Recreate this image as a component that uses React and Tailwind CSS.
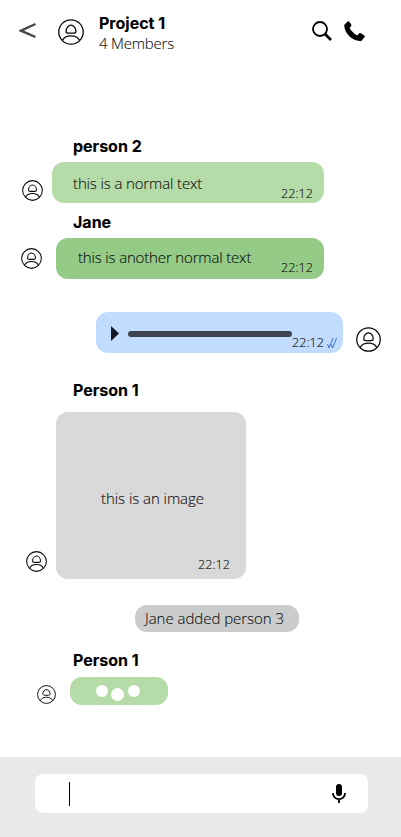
function Avatar({ className }) {
  return (
    <svg viewBox="0 0 26 26" fill="none" stroke="#080808" strokeWidth="1.3" className={`shrink-0 ${className}`}>
      <circle cx="13" cy="13" r="12.2" />
      <path d="M8.1 12.400C8.1 9 10.2 6.200 13 6.200s4.900 2.800 4.900 6.200c0 1.100-1 1.700-2.300 1.700h-5.200c-1.300 0-2.300-.6-2.300-1.700Z" />
      <path d="M4.400 21.600C5.600 18.500 8.700 16.800 13 16.800s7.400 1.700 8.600 4.800" />
    </svg>
  );
}

function Name({ children, className }) {
  return (
    <h2 className={`ml-[73px] h-5 whitespace-nowrap font-['Inter',sans-serif] text-base leading-5 font-bold text-black ${className}`}>
      {children}
    </h2>
  );
}

function Time({ className }) {
  return <time className={`text-[12.5px] leading-4 font-light tracking-[0.08px] whitespace-nowrap ${className}`}>22:12</time>;
}

function Header() {
  return (
    <header className="flex h-[136px] items-start pl-[19px]">
      <svg viewBox="0 0 18 17" className="mt-[22px] h-[17px] w-[18px]" fill="none" stroke="#484848" strokeWidth="2.4">
        <path d="M16.5 2 2 8.700l14.500 6.300" />
      </svg>
      <Avatar className="mt-[19px] ml-[21px] h-[26px] w-[26px]" />
      <div className="mt-[13px] ml-[15px] w-[212px]">
        <h1 className="font-['Inter',sans-serif] text-base leading-5 font-bold text-black">Project 1</h1>
        <p className="-mt-px text-[15px] leading-[22px] font-light tracking-[-0.22px]">4 Members</p>
      </div>
      <svg viewBox="0 0 20 20" className="mt-[21px] ml-[0.5px] h-5 w-5" fill="none" stroke="black" strokeWidth="1.8">
        <circle cx="8" cy="8" r="7" />
        <path d="m13 13 6 6" strokeWidth="2.6" />
      </svg>
      <svg viewBox="0 0 21 21" className="mt-[21px] ml-[12.5px] h-[21px] w-[21px]" fill="black">
        <path d="M.6 3.600 3.700.5q.8-.6 1.600.2l2 3q.4.9-.3 1.600L5.900 6.700q-.2.7.3 1.400c1.700 2.600 3.600 4.400 6.200 5.900q.7.4 1.200-.1l1.800-1.700q.7-.4 1.500 0l3.500 2.200q.8.7.2 1.600l-2.800 3.500q-.7.7-1.900.6C7.500 19.200.8 12.400.2 4.700q-.1-.6.4-1.100Z" />
      </svg>
    </header>
  );
}

function Footer() {
  return (
    <footer className="h-20 bg-[#e9e9e9] px-[35px] pt-[17px]">
      <div className="flex h-[39px] w-[333px] items-start justify-between rounded-lg bg-white pt-2 pr-[22px] pl-[34px]">
        <div className="h-6 w-px bg-black" />
        <svg viewBox="0 0 14 19" className="mt-[2px] h-[19px] w-[14px]" fill="none" stroke="black">
          <rect x="4" y="0" width="6" height="12" rx="3" fill="black" stroke="none" />
          <path d="M.9 9a6.100 6.100 0 0 0 12.200 0M7 15v4" strokeWidth="1.8" />
        </svg>
      </div>
    </footer>
  );
}

export default function App() {
  return (
    <div className="flex h-[837px] w-[401px] flex-col overflow-hidden bg-white font-['Open_Sans','Noto_Sans',sans-serif] text-[#101010] [-webkit-text-stroke:0.12px]">
      <Header />
      <main className="flex h-[621px] flex-col">
        <Name>person 2</Name>
        <div className="mt-[6px] flex items-start pl-[21.5px]">
          <Avatar className="mt-[18px] h-[21px] w-[21px]" />
          <div className="ml-[9.5px] flex h-[41px] w-[272px] justify-between rounded-xl bg-[#b5dba9] pr-[11px] pl-[21px]">
            <span className="mt-[10px] text-[15px] leading-[22px] font-light tracking-[-0.13px] whitespace-nowrap">this is a normal text</span>
            <Time className="mt-6" />
          </div>
        </div>

        <Name className="mt-[9px]">Jane</Name>
        <div className="mt-[6px] flex items-start pl-[21px]">
          <Avatar className="mt-[10px] h-[21px] w-[21px]" />
          <div className="ml-[14px] flex h-[41px] w-[268px] justify-between rounded-xl bg-[#94cb87] pr-[11px] pl-[22px]">
            <span className="mt-[8px] text-[15px] leading-[22px] font-light tracking-[-0.16px] whitespace-nowrap">this is another normal text</span>
            <Time className="mt-[22px]" />
          </div>
        </div>

        <div className="mt-[33px] flex items-start pl-[96px]">
          <div className="flex h-[41px] w-[247px] items-start rounded-xl bg-[#c2dcff] pl-[14.5px]">
            <svg viewBox="0 0 8 15" className="mt-[13.5px] h-[15px] w-2" fill="#111922"><path d="M0 0l8 7.500L0 15Z" /></svg>
            <div className="mt-[19px] ml-[9.5px] h-[6px] w-[164px] rounded-full bg-[#3c4350]" />
            <Time className="mt-[23px]" />
            <svg viewBox="0 0 10 12" className="mt-[25px] ml-[3px] h-3 w-[10px]" fill="none" stroke="#3975d4" strokeWidth="1">
              <path d="M.5 7 2 11 6.200 1M4 7l1.500 4L9.600 1" />
            </svg>
          </div>
          <Avatar className="mt-[15px] ml-[13px] h-[25px] w-[25px]" />
        </div>

        <Name className="mt-[27px]">Person 1</Name>
        <div className="mt-[12px] flex items-start pl-[26px]">
          <Avatar className="mt-[139px] h-[21px] w-[21px]" />
          <div className="ml-[9px] flex h-[167px] w-[190px] flex-col rounded-xl bg-[#d9d9d9]">
            <span className="mt-[75px] ml-[45px] text-[15px] leading-[22px] font-light tracking-[-0.05px] whitespace-nowrap">this is an image</span>
            <Time className="mt-[48px] mr-4 self-end" />
          </div>
        </div>

        <div className="mt-[26px] ml-[135px] h-[27px] w-[164px] rounded-xl bg-[#cbcdcc] pt-[2px] pl-[10px] text-[15px] leading-[22px] font-light tracking-[-0.03px] whitespace-nowrap">
          <span>Jane added person 3</span>
        </div>

        <Name className="mt-[18px]">Person 1</Name>
        <div className="mt-[7px] flex items-start pl-[37px]">
          <Avatar className="mt-[8px] h-[19px] w-[19px]" />
          <div className="ml-[14px] flex h-7 w-[98px] items-start rounded-xl bg-[#b5dba9] pt-2 pl-[26px]">
            <i className="h-3 w-3 rounded-full bg-white" />
            <i className="mt-[3px] ml-[3px] h-[13px] w-[13px] rounded-full bg-white" />
            <i className="ml-1 h-3 w-3 rounded-full bg-white" />
          </div>
        </div>
      </main>
      <Footer />
    </div>
  );
}
